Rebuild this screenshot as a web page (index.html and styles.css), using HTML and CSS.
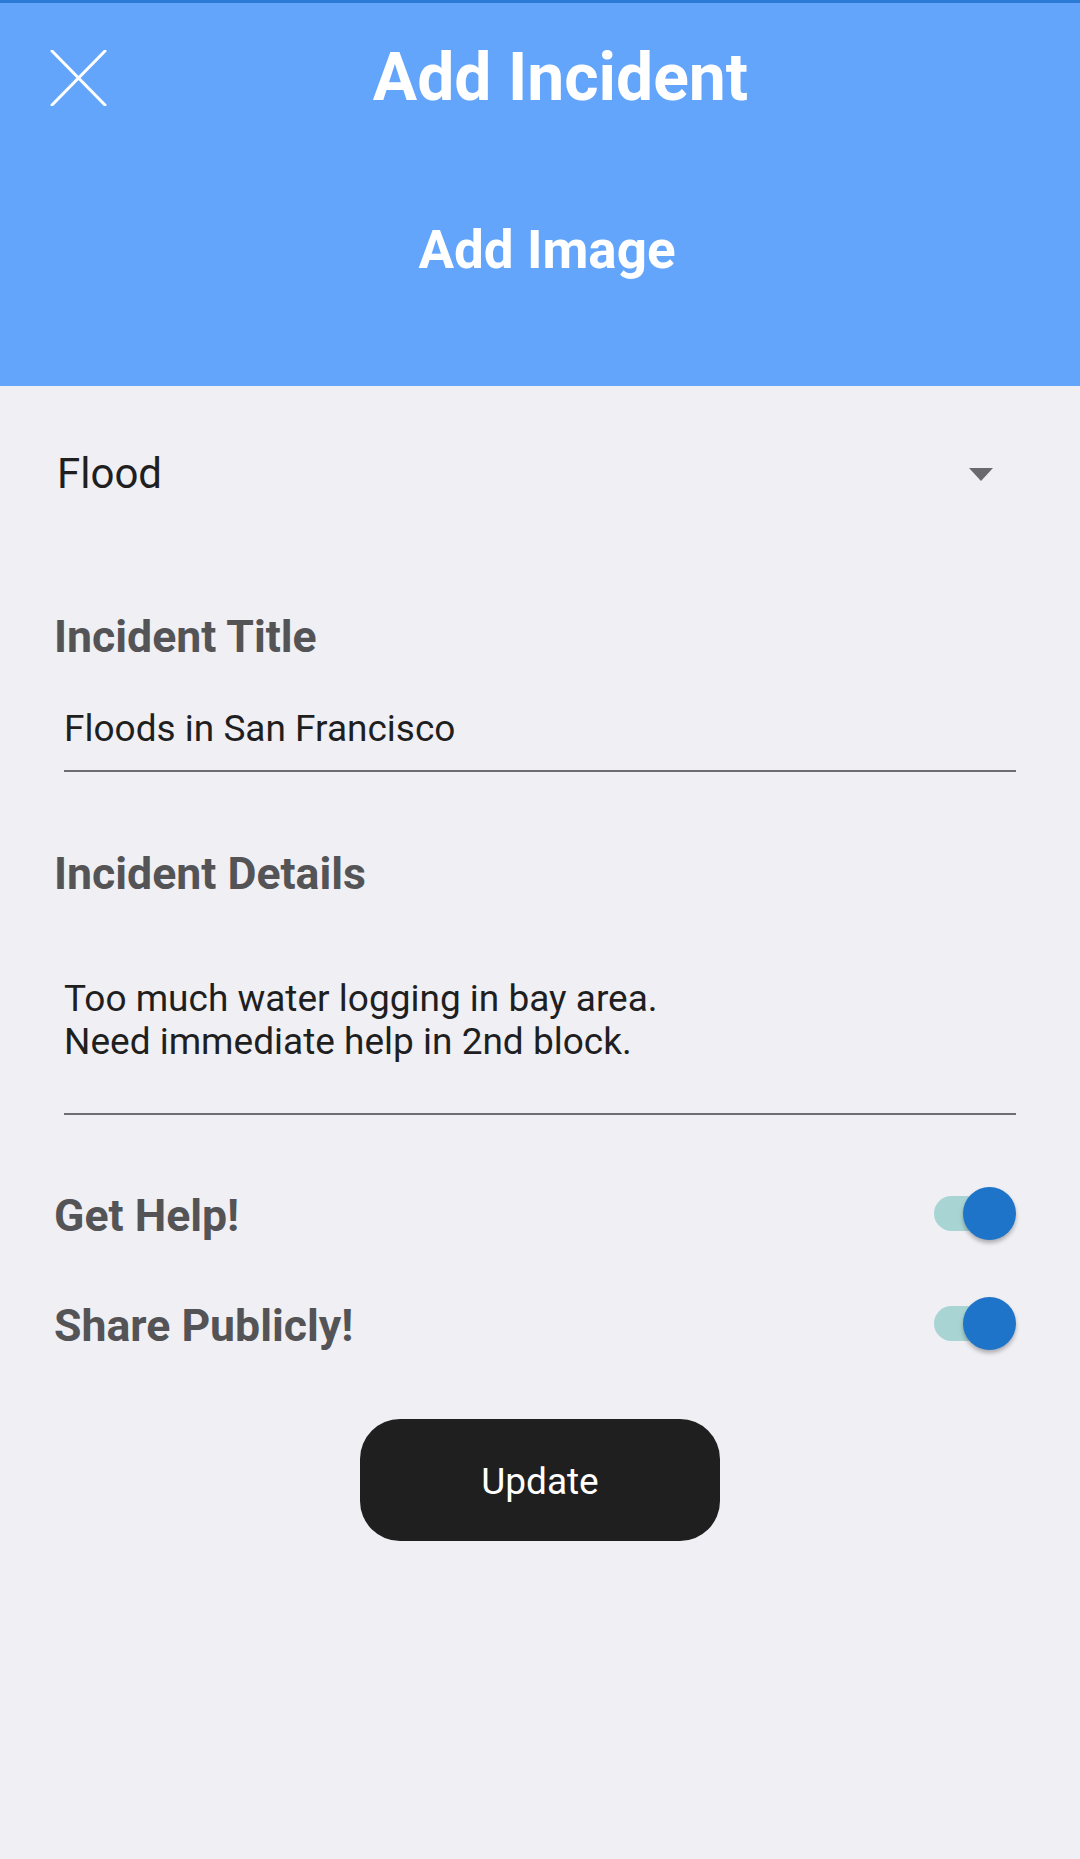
FILE: index.html
```html
<!DOCTYPE html>
<html lang="en">
<head>
<meta charset="utf-8">
<title>Add Incident</title>
<link rel="stylesheet" href="styles.css">
</head>
<body>
<div class="screen">
  <header class="header">
    <div class="title-row">
      <button class="close" aria-label="Close">
        <svg width="57" height="56" viewBox="0 0 57 56"><path d="M2 1 L55 55 M55 1 L2 55" stroke="#fff" stroke-width="3" stroke-linecap="round" fill="none"/></svg>
      </button>
      <h1 class="title">Add Incident</h1>
    </div>
    <div class="add-image">Add Image</div>
  </header>

  <main class="form">
    <div class="select-row">
      <span class="select-value">Flood</span>
      <span class="caret"></span>
    </div>

    <div class="label first-label">Incident Title</div>
    <div class="field single">Floods in San Francisco</div>

    <div class="label">Incident Details</div>
    <div class="field multi">Too much water logging in bay area.<br>Need immediate help in 2nd block.</div>

    <div class="toggle-row first-toggle">
      <span class="label inline">Get Help!</span>
      <span class="switch"><span class="track"></span><span class="thumb"></span></span>
    </div>
    <div class="toggle-row second-toggle">
      <span class="label inline">Share Publicly!</span>
      <span class="switch"><span class="track"></span><span class="thumb"></span></span>
    </div>

    <div class="actions">
      <button class="update">Update</button>
    </div>
  </main>
</div>
</body>
</html>
```
FILE: styles.css
```css
* { box-sizing: border-box; }
html, body { margin: 0; padding: 0; }
body {
  background: #efeff4;
  font-family: Roboto, "Noto Sans", "Liberation Sans", sans-serif;
  width: 1080px;
  min-height: 1859px;
}
.screen { width: 1080px; }

.header {
  background: #64a5fc;
  border-top: 3px solid #2a7ad6;
  height: 386px;
  display: flex;
  flex-direction: column;
}
.title-row {
  display: flex;
  align-items: center;
  margin-top: 35px;
  height: 80px;
  padding-right: 66px;
}
.close {
  background: none;
  border: 0;
  padding: 0;
  margin-left: 50px;
  width: 57px;
  height: 56px;
  display: flex;
}
.title {
  flex: 1;
  margin: 0;
  text-align: center;
  color: #fff;
  font-size: 66px;
  line-height: 80px;
  font-weight: 700;
}
.add-image {
  margin-top: 102px;
  padding-left: 14px;
  text-align: center;
  color: #fff;
  font-size: 53px;
  line-height: 60px;
  font-weight: 700;
}

.form {
  padding: 0 64px 0 54px;
}
.select-row {
  margin-top: 58px;
  height: 60px;
  display: flex;
  align-items: center;
  justify-content: space-between;
  padding-left: 3px;
  padding-right: 23px;
}
.select-value {
  font-size: 42px;
  line-height: 60px;
  color: #1f1f1f;
}
.caret {
  width: 0;
  height: 0;
  border-left: 12px solid transparent;
  border-right: 12px solid transparent;
  border-top: 13px solid #6a6a6e;
}

.label {
  font-size: 44.6px;
  line-height: 54px;
  font-weight: 700;
  color: #545456;
  margin-top: 75px;
}
.first-label { margin-top: 106px; }

.field {
  margin-left: 10px;
  color: #1f1f1f;
  font-size: 37px;
  border-bottom: 2px solid #6e6d72;
}
.single {
  margin-top: 42px;
  line-height: 46px;
  padding-bottom: 18px;
}
.multi {
  margin-top: 76px;
  line-height: 43px;
  padding-bottom: 50px;
}

.toggle-row {
  height: 60px;
  display: flex;
  align-items: center;
  justify-content: space-between;
}
.first-toggle { margin-top: 68px; }
.second-toggle { margin-top: 50px; }
.label.inline { margin-top: 0; padding-top: 5px; }

.switch {
  position: relative;
  width: 82px;
  height: 54px;
  display: flex;
  align-items: center;
}
.track {
  width: 72px;
  height: 35px;
  border-radius: 18px;
  background: #a8d5d4;
}
.thumb {
  position: absolute;
  right: 0;
  top: 1px;
  width: 53px;
  height: 53px;
  border-radius: 50%;
  background: #1e74c9;
  box-shadow: 0 3px 4px rgba(0,0,0,0.28);
}

.actions {
  display: flex;
  justify-content: center;
  margin-top: 66px;
  margin-left: -54px;
  margin-right: -64px;
}
.update {
  width: 360px;
  height: 122px;
  border: 0;
  border-radius: 40px;
  background: #1f1f1f;
  color: #fff;
  font-family: Roboto, "Noto Sans", "Liberation Sans", sans-serif;
  font-size: 37px;
  padding: 3px 0 0 0;
}
```
